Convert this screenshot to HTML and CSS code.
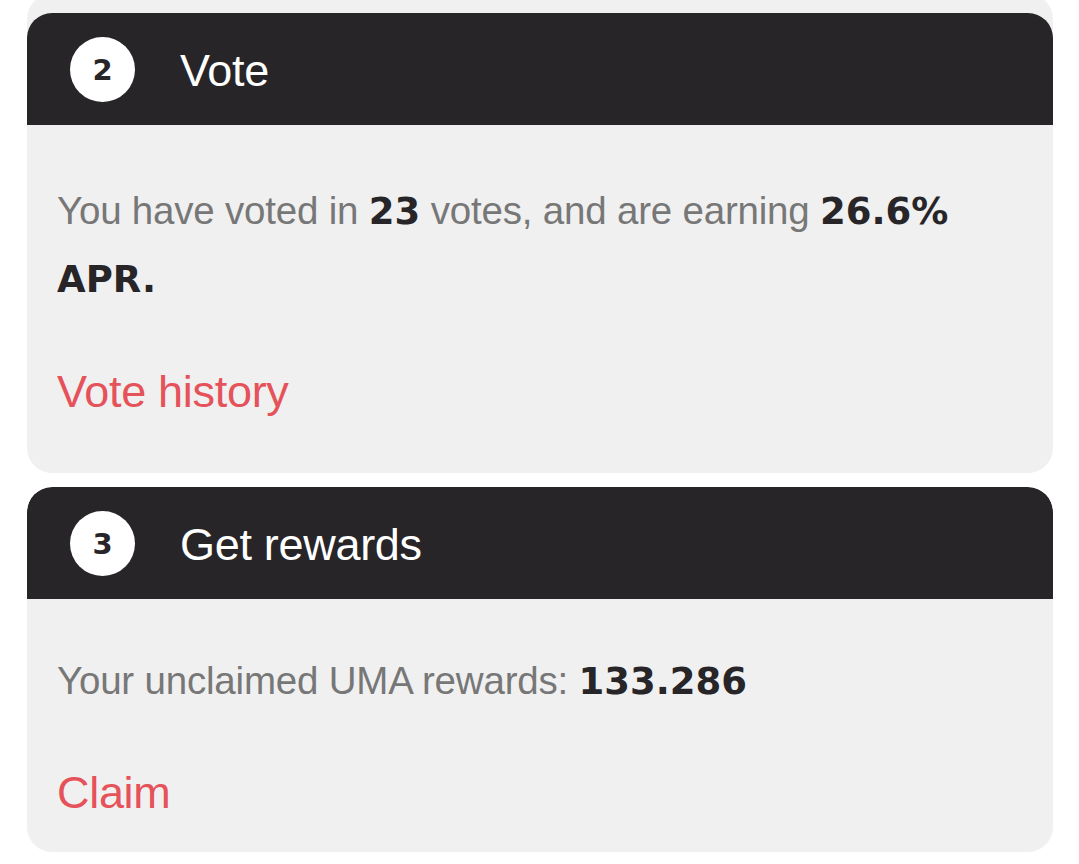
FILE: index.html
```html
<!DOCTYPE html>
<html lang="en">
<head>
<meta charset="utf-8">
<title>Voting steps</title>
<link rel="stylesheet" href="styles.css">
</head>
<body>
<main class="page">
  <section class="card card-vote">
    <header class="card-head">
      <span class="step">2</span>
      <h2 class="title">Vote</h2>
    </header>
    <div class="card-body body-vote">
      <p class="text">You have voted in <b>23</b> votes, and are earning <b>26.6%</b> <b>APR.</b></p>
      <a class="link link-vote" href="#">Vote history</a>
    </div>
  </section>
  <section class="card card-rewards">
    <header class="card-head">
      <span class="step">3</span>
      <h2 class="title">Get rewards</h2>
    </header>
    <div class="card-body body-rewards">
      <p class="text">Your unclaimed UMA rewards: <b>133.286</b></p>
      <a class="link link-claim" href="#">Claim</a>
    </div>
  </section>
</main>
</body>
</html>
```
FILE: styles.css
```css
html, body {
  margin: 0;
  padding: 0;
  background: #ffffff;
}
body {
  font-family: "Liberation Sans", Arial, sans-serif;
  overflow: hidden;
}
.page {
  padding: 0 26px 0 27px;
  display: flex;
  flex-direction: column;
  gap: 14px;
}
.card {
  background: #f0f0f0;
  border-radius: 25px;
  overflow: hidden;
}
.card-vote {
  margin-top: -6px;
  padding-top: 19px;
}
.card-head {
  background: #272528;
  border-radius: 25px 25px 0 0;
  height: 112px;
  display: flex;
  align-items: center;
  padding-left: 43px;
  gap: 45px;
}
.step {
  width: 65px;
  height: 65px;
  border-radius: 50%;
  background: #ffffff;
  color: #272528;
  display: flex;
  align-items: center;
  justify-content: center;
  font-family: "DejaVu Sans", sans-serif;
  font-weight: bold;
  font-size: 29px;
  padding-top: 2px;
  box-sizing: border-box;
}
.title {
  margin: 0;
  color: #ffffff;
  font-weight: normal;
  font-size: 45px;
  letter-spacing: -0.3px;
  padding-top: 3px;
}
.card-body {
  padding-left: 30px;
  padding-right: 30px;
}
.body-vote {
  padding-top: 52px;
  padding-bottom: 48px;
}
.body-rewards {
  padding-top: 48px;
  padding-bottom: 26px;
}
.text {
  margin: 0;
  font-size: 38.5px;
  line-height: 67px;
  color: #777777;
  letter-spacing: -0.2px;
}
.text b {
  font-family: "DejaVu Sans", sans-serif;
  font-weight: bold;
  color: #272528;
  font-size: 37px;
  letter-spacing: 0;
}
.link {
  display: block;
  font-size: 45px;
  line-height: 67px;
  color: #e5525a;
  text-decoration: none;
  letter-spacing: -0.3px;
}
.link-vote {
  margin-top: 45px;
}
.link-claim {
  margin-top: 44px;
}
```
